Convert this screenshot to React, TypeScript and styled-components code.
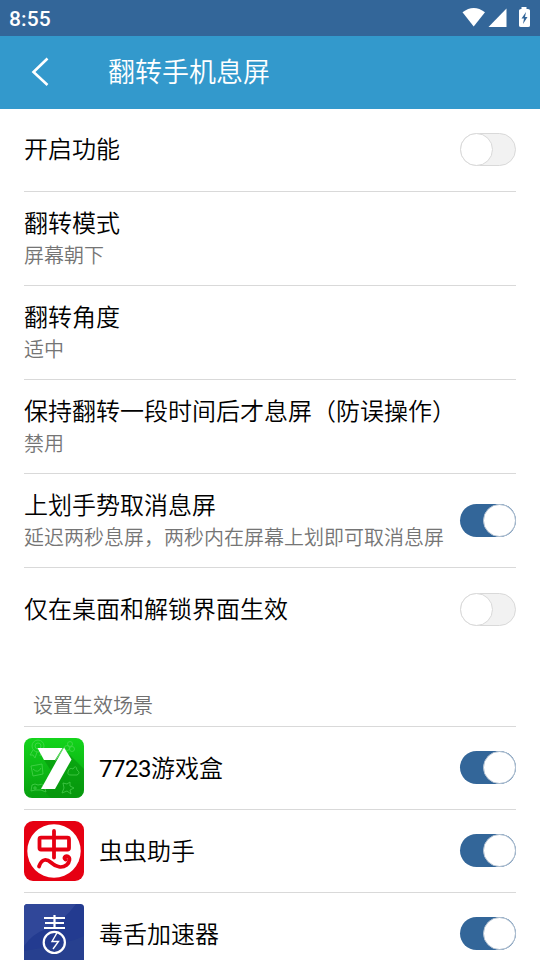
import React, { useState } from "react";
import styled, { createGlobalStyle } from "styled-components";

const GlobalStyle = createGlobalStyle`
  *, *::before, *::after { box-sizing: border-box; }
  body {
    margin: 0;
    background: #fff;
    font-family: Roboto, "Noto Sans CJK SC", sans-serif;
    color: #000;
  }
`;

const Screen = styled.div`
  width: 540px;
  height: 960px;
  overflow: hidden;
  display: flex;
  flex-direction: column;
  background: #fff;
`;

const StatusBar = styled.div`
  flex: none;
  height: 36px;
  padding: 0 9px;
  display: flex;
  align-items: center;
  justify-content: space-between;
  background: #336699;
  color: #fff;
`;

const Clock = styled.span`
  font-size: 21px;
  font-weight: 500;
  line-height: 36px;
  padding-top: 2px;
  letter-spacing: 0.15px;
`;

const StatusIcons = styled.svg`
  display: block;
  width: 70px;
  height: 36px;
`;

const TitleBar = styled.header`
  flex: none;
  height: 73px;
  display: flex;
  align-items: center;
  background: #3399cc;
  color: #fff;
`;

const BackButton = styled.button`
  width: 108px;
  height: 73px;
  padding: 0 0 2px 30px;
  border: 0;
  background: none;
  display: flex;
  align-items: center;
`;

const Title = styled.h1`
  margin: 0;
  font-size: 27px;
  font-weight: 350;
  line-height: 40px;
`;

const List = styled.div`
  flex: none;
  padding: 0 24px;
`;

const Row = styled.div<{ $tall?: boolean; $last?: boolean }>`
  height: ${(p) => (p.$tall ? 94 : 83)}px;
  padding-top: ${(p) => (p.$last ? 2 : 0)}px;
  display: flex;
  align-items: center;
  border-bottom: 1px solid ${(p) => (p.$last ? "transparent" : "#d9d9d9")};
`;

const Texts = styled.div`
  flex: 1;
  white-space: nowrap;
`;

const Label = styled.div`
  font-size: 24px;
  font-weight: 350;
  line-height: 35px;
`;

const AppName = styled(Label)`
  flex: 1;
  padding-top: 2px;
`;

const Digits = styled.span`
  font-weight: 400;
  letter-spacing: -0.5px;
`;

const Summary = styled.div`
  font-size: 20px;
  font-weight: 350;
  line-height: 29px;
  color: #757575;
`;

const SectionTitle = styled.h2`
  margin: 0;
  height: 76px;
  padding: 40px 0 0 9px;
  border-bottom: 1px solid #d9d9d9;
  font-size: 20px;
  font-weight: 350;
  line-height: 30px;
  color: #707070;
`;

const AppIcon = styled.svg`
  flex: none;
  width: 60px;
  height: 60px;
  margin-right: 15px;
`;

const Track = styled.button<{ $on: boolean }>`
  flex: none;
  width: 56px;
  height: 33px;
  margin: 0 0 1px;
  padding: 0;
  border: ${(p) => (p.$on ? "0" : "1px solid #d9d9d9")};
  border-radius: 17px;
  background: ${(p) => (p.$on ? "#336699" : "#f2f2f2")};
  display: flex;
  align-items: center;
  justify-content: ${(p) => (p.$on ? "flex-end" : "flex-start")};
`;

const Thumb = styled.span<{ $on: boolean }>`
  flex: none;
  width: 33px;
  height: 33px;
  margin-left: ${(p) => (p.$on ? 0 : -1)}px;
  border-radius: 50%;
  border: 1px solid ${(p) => (p.$on ? "#b5c3d2" : "#d9d9d9")};
  background: #fff;
`;

function Toggle({ initial }: { initial: boolean }) {
  const [on, setOn] = useState(initial);
  return (
    <Track $on={on} role="switch" aria-checked={on} onClick={() => setOn(!on)}>
      <Thumb $on={on} />
    </Track>
  );
}

function GameBoxIcon() {
  return (
    <AppIcon viewBox="0 0 60 60">
      <defs>
        <linearGradient id="green" x1="0" y1="0" x2="0" y2="1">
          <stop offset="0" stopColor="#14d41c" />
          <stop offset="1" stopColor="#08a010" />
        </linearGradient>
        <clipPath id="greenClip">
          <rect width="60" height="60" rx="8" />
        </clipPath>
      </defs>
      <g clipPath="url(#greenClip)">
        <rect width="60" height="60" fill="url(#green)" />
        <path d="M46 17L60 31V60H27L18 51L28 34L20 22Z" fill="#078f0d" opacity=".55" />
        <g fill="none" stroke="#5fdc62" strokeWidth=".9" opacity=".65">
          <circle cx="14" cy="8" r="6" />
          <circle cx="14" cy="8" r="3" />
          <path d="M9 12L6 17L9 17L11 20L13 14M17 14L16 18" />
          <circle cx="46" cy="6" r="2.500" />
          <circle cx="43" cy="10" r="2.500" />
          <circle cx="48" cy="11" r="2.500" />
          <path d="M7 28L18 26L19 36L9 38ZM9 31q5 5 8-1" />
          <path d="M44 34q1-5 5-3q3-5 4 1q4 3 0 5H47q-4 0-3-3" />
          <path d="M8 47q3-2 6 0q4-2 6 1l2 6l-5-2h-6l-4 1zM11 48v4M9 50h4M17 50h1" />
          <path d="M39 45l4 1l3-2l0 4l4 2l-4 2l1 4l-4-3l-5 2l2-5z" />
        </g>
        <path d="M13.500 10H38.500L31 22H20Z" fill="#fff" />
        <path d="M40 9.500L47.500 21.500L31 51H17Z" fill="#fff" />
        <path d="M39.500 10L31.500 22.500" stroke="#8ddf8f" strokeWidth=".8" />
      </g>
    </AppIcon>
  );
}

function HelperIcon() {
  return (
    <AppIcon viewBox="0 0 60 60">
      <rect width="60" height="60" rx="9" fill="#e60012" />
      <circle cx="30" cy="30" r="26.700" fill="#fff" />
      <g fill="none" stroke="#e60012" strokeWidth="3.800" strokeLinecap="round" strokeLinejoin="round">
        <rect x="15.500" y="16.700" width="29.500" height="11.800" rx="1.500" />
        <path d="M30 10V36.500" />
        <path d="M15 45.500C18 37 23 38 27 41.500C32 46 38 47.500 42.500 44C46 41 46.500 36.500 43.500 35.300C41 34.500 39.500 37 41.500 38.500" />
      </g>
    </AppIcon>
  );
}

function AcceleratorIcon() {
  return (
    <AppIcon viewBox="0 0 60 60">
      <rect width="60" height="60" rx="3.500" fill="#233b90" />
      <path d="M3.500 0H52Q39 18 22 25Q8 30 0 42V3.500Q0 0 3.500 0Z" fill="#304799" />
      <path d="M60 32Q44 40 0 47V60H60Z" fill="#29438f" opacity=".7" />
      <g fill="none" stroke="#fff" strokeWidth="2.200">
        <path d="M20 14H41M21 19H40M20 24H41M30.500 11V24" />
        <circle cx="30.300" cy="38.400" r="10.600" />
        <path d="M33.500 28L28 37.500H34.500L29 45" strokeWidth="1.400" />
      </g>
    </AppIcon>
  );
}

type Setting = { label: string; summary?: string; on?: boolean };

const settings: Setting[] = [
  { label: "开启功能", on: false },
  { label: "翻转模式", summary: "屏幕朝下" },
  { label: "翻转角度", summary: "适中" },
  { label: "保持翻转一段时间后才息屏（防误操作）", summary: "禁用" },
  { label: "上划手势取消息屏", summary: "延迟两秒息屏，两秒内在屏幕上划即可取消息屏", on: true },
  { label: "仅在桌面和解锁界面生效", on: false },
];

const apps = [
  { digits: "7723", name: "游戏盒", Icon: GameBoxIcon },
  { name: "虫虫助手", Icon: HelperIcon },
  { name: "毒舌加速器", Icon: AcceleratorIcon },
];

export default function App() {
  return (
    <Screen>
      <GlobalStyle />
      <StatusBar>
        <Clock>8:55</Clock>
        <StatusIcons viewBox="0 0 70 36" fill="#fff">
          <path d="M1.500 12.300Q12.700 3.700 24 12.300L12.700 26.500Z" />
          <path d="M45.500 8.500V27H27.500Z" />
          <path d="M60.500 7H65.500V9H67Q69 9 69 10.500V25.500Q69 27 67 27H60Q58 27 58 25.500V10.500Q58 9 60 9H60.500Z" />
          <path d="M65 12L60.500 18.500H63L62 24L66.500 17H64Z" fill="#336699" />
        </StatusIcons>
      </StatusBar>
      <TitleBar>
        <BackButton aria-label="返回">
          <svg width="22" height="32" viewBox="0 0 22 32" fill="none" stroke="#fff" strokeWidth="2.600">
            <path d="M17.500 2.500L3.500 16L17.500 29" />
          </svg>
        </BackButton>
        <Title>翻转手机息屏</Title>
      </TitleBar>
      <List>
        {settings.map((s, i) => (
          <Row key={s.label} $tall={!!s.summary} $last={i === settings.length - 1}>
            <Texts>
              <Label>{s.label}</Label>
              {s.summary && <Summary>{s.summary}</Summary>}
            </Texts>
            {s.on !== undefined && <Toggle initial={s.on} />}
          </Row>
        ))}
        <SectionTitle>设置生效场景</SectionTitle>
        {apps.map(({ digits, name, Icon }) => (
          <Row key={name}>
            <Icon />
            <AppName>
              {digits && <Digits>{digits}</Digits>}
              {name}
            </AppName>
            <Toggle initial />
          </Row>
        ))}
      </List>
    </Screen>
  );
}
